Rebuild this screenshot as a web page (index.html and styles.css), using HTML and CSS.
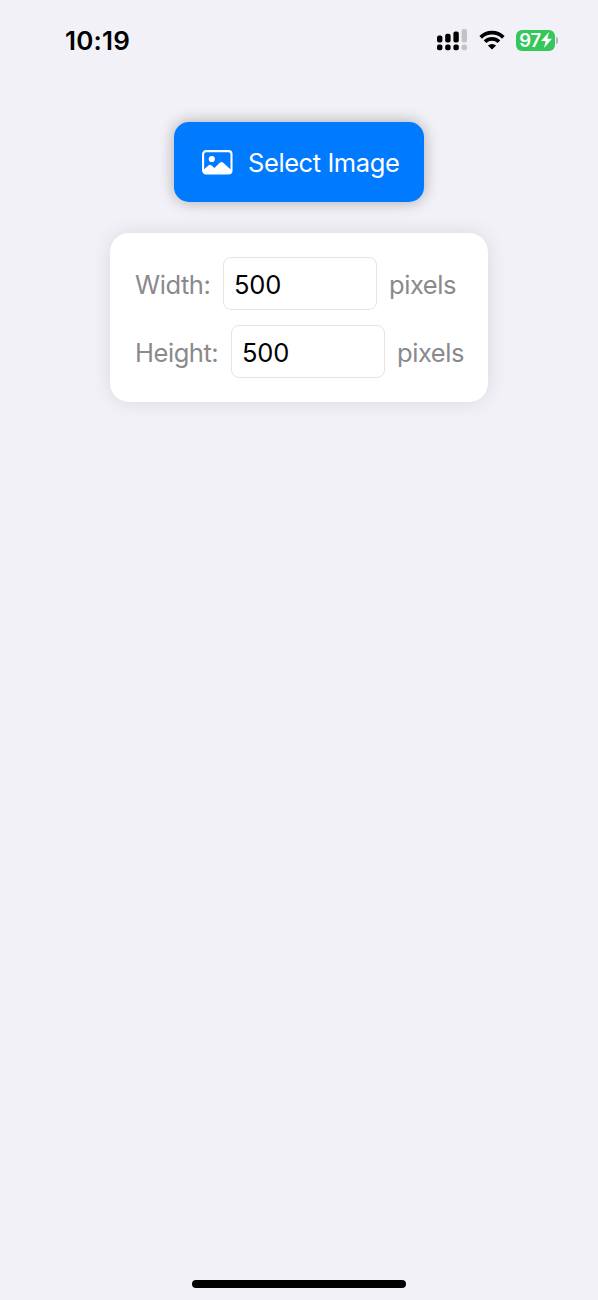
FILE: index.html
```
<!DOCTYPE html>
<html lang="en">
<head>
  <meta charset="UTF-8">
  <meta name="viewport" content="width=device-width, initial-scale=1">
  <title>Select Image</title>
  <link rel="stylesheet" href="styles.css">
</head>
<body>

<div class="status-bar">
  <span class="time">10:19</span>
  <div class="status-icons">
    <svg class="signal" width="30" height="22" viewBox="0 0 30 22">
      <rect x="0" y="6.5" width="5.4" height="7" rx="2"/>
      <rect x="8.2" y="4.8" width="5.4" height="8.7" rx="2"/>
      <rect x="16.4" y="2.5" width="5.4" height="11" rx="2"/>
      <rect class="off" x="24.6" y="0" width="5.4" height="13.5" rx="2"/>
      <rect x="0" y="15.4" width="5.4" height="5.8" rx="2"/>
      <rect x="8.2" y="15.4" width="5.4" height="5.8" rx="2"/>
      <rect x="16.4" y="15.4" width="5.4" height="5.8" rx="2"/>
      <rect class="off" x="24.6" y="15.4" width="5.4" height="5.8" rx="2"/>
    </svg>
    <svg class="wifi" width="26" height="20" viewBox="0 0 26 20">
      <path class="arc" d="M1.7 7.3a16.2 16.2 0 0 1 22.6 0"/>
      <path class="arc" d="M6 11.7a10.1 10.1 0 0 1 14 0"/>
      <path d="M8.9 15.6a6 6 0 0 1 8.2 0L13.6 19q-.6.6-1.2 0z"/>
    </svg>
    <div class="battery">
      <span>97</span>
      <svg width="11" height="16" viewBox="0 0 11 16">
        <path d="M8 0L0 9h4.6L3 16l8-9.2H6.4z"/>
      </svg>
    </div>
  </div>
</div>

<div class="container">
  <button type="button" class="select-btn">
    <svg width="31" height="25" viewBox="0 0 31 25">
      <rect class="frame" x="1.1" y="1.1" width="28.4" height="22.4" rx="3"/>
      <circle cx="9.8" cy="9" r="3.1"/>
      <path d="M1 20.2l5.7-4.9q1.3-1 2.5 0l3.2 2.8 5.6-5.5q1.5-1.4 3 0l8.5 7.6v.8a2.8 2.8 0 0 1-2.8 2.8H4A3 3 0 0 1 1 20.8z"/>
    </svg>
    <span>Select Image</span>
  </button>

  <form class="card">
    <div class="row">
      <label for="width">Width:</label>
      <input type="text" id="width" value="500">
      <span class="unit">pixels</span>
    </div>
    <div class="row">
      <label for="height" class="wide">Height:</label>
      <input type="text" id="height" value="500">
      <span class="unit">pixels</span>
    </div>
  </form>
</div>

<div class="home-bar"></div>

</body>
</html>
```

FILE: styles.css
```
* {
  box-sizing: border-box;
}

body {
  margin: 0;
  height: 1300px;
  display: flex;
  flex-direction: column;
  align-items: center;
  background: #f2f1f7;
  font-family: Inter, sans-serif;
  font-size: 25.5px;
  color: black;
}

.status-bar {
  width: 100%;
  height: 80px;
  padding: 0 43px 0 65px;
  display: flex;
  align-items: center;
  justify-content: space-between;
}

.time {
  font-size: 26px;
  font-weight: 600;
  letter-spacing: 0.2px;
}

.status-icons {
  display: flex;
  align-items: center;
}

.signal .off {
  fill: #c2c2c7;
}

.wifi {
  margin: 0 11px 0 12px;
}

.wifi .arc {
  fill: none;
  stroke: black;
  stroke-width: 3.8;
}

.battery {
  position: relative;
  width: 39px;
  height: 21px;
  border-radius: 6px;
  background: #34c759;
  color: white;
  display: flex;
  align-items: center;
  justify-content: center;
  font-size: 18.5px;
  font-weight: 600;
  letter-spacing: -0.3px;
}

.battery svg {
  fill: white;
}

.battery::after {
  content: "";
  position: absolute;
  right: -3px;
  top: 7px;
  width: 2px;
  height: 7px;
  border-radius: 0 2px 2px 0;
  background: #b5b5ba;
}

.container {
  flex: 1;
  padding-top: 42px;
  display: flex;
  flex-direction: column;
  align-items: center;
}

.select-btn {
  width: 250px;
  height: 80px;
  padding: 0 0 0 28px;
  border: none;
  border-radius: 15px;
  background: #007aff;
  box-shadow: 0 0 15px rgba(0, 0, 0, 0.3);
  color: white;
  font: inherit;
  display: flex;
  align-items: center;
  gap: 15px;
  cursor: pointer;
}

.select-btn span {
  white-space: nowrap;
  letter-spacing: -0.42px;
}

.select-btn svg {
  fill: white;
}

.select-btn .frame {
  fill: none;
  stroke: white;
  stroke-width: 2.1;
}

.card {
  width: 378px;
  height: 169px;
  margin: 31px 0 0;
  padding: 24px 24px 25px 25px;
  border-radius: 19px;
  background: white;
  box-shadow: 0 0 20px rgba(0, 0, 0, 0.1);
  display: flex;
  flex-direction: column;
  gap: 15px;
}

.row {
  display: flex;
  align-items: center;
  color: #8a8a8d;
  letter-spacing: -0.45px;
}

.row label {
  width: 88px;
  flex-shrink: 0;
  padding-top: 2px;
}

.row .wide {
  width: 96px;
}

.row input {
  width: 154px;
  height: 53px;
  flex-shrink: 0;
  padding: 1px 10px 0;
  border: 1px solid #e4e4e6;
  border-radius: 8px;
  background: white;
  color: black;
  font: inherit;
  letter-spacing: -0.2px;
}

.unit {
  margin-left: 12px;
  padding-top: 2px;
}

.home-bar {
  width: 214px;
  height: 8px;
  margin-bottom: 12px;
  border-radius: 4px;
  background: black;
}
```
